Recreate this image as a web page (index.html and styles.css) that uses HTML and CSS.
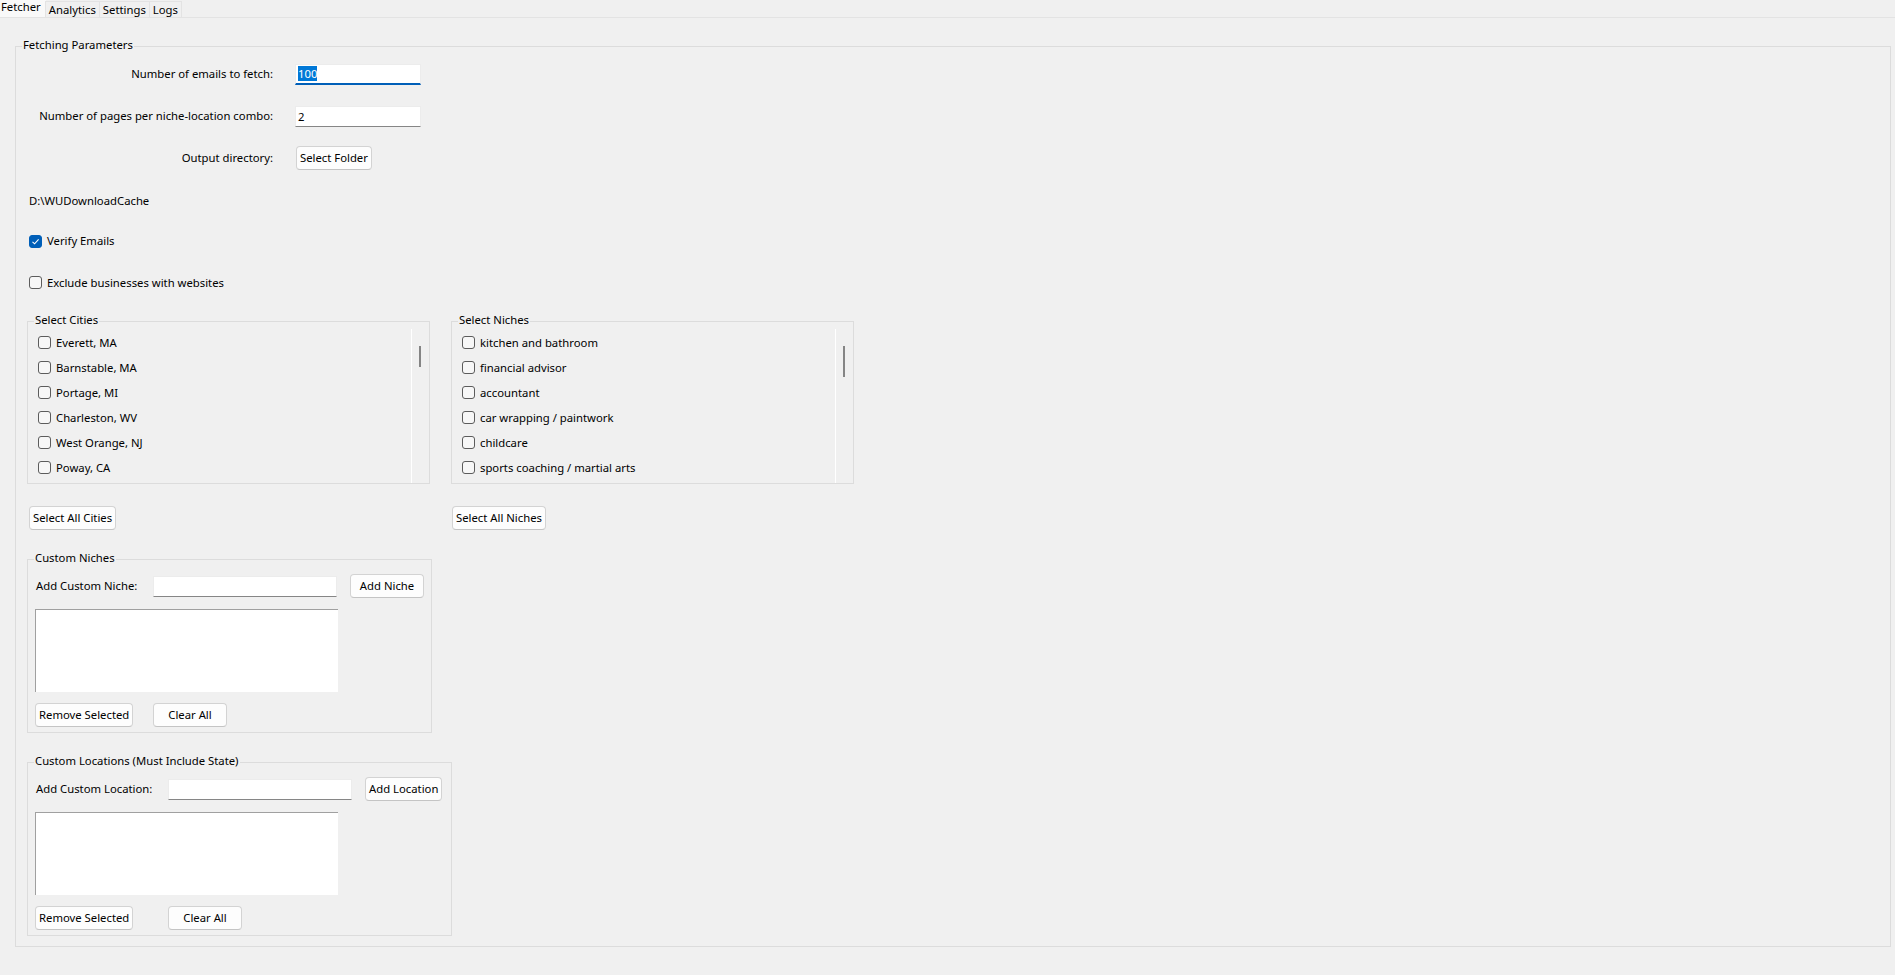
FILE: index.html
```html
<!DOCTYPE html>
<html lang="en">
<head>
    <meta charset="UTF-8">
    <title>Email Fetcher</title>
    <link rel="stylesheet" href="styles.css">
</head>
<body>
    <div class="tabs">
        <span class="tab active">Fetcher</span>
        <span class="tab">Analytics</span>
        <span class="tab">Settings</span>
        <span class="tab">Logs</span>
    </div>

    <div class="group main">
        <div class="group-title">Fetching Parameters</div>

        <div class="form">
            <label>Number of emails to fetch:</label>
            <div class="entry focused"><span class="sel">100</span></div>

            <label>Number of pages per niche-location combo:</label>
            <div class="entry">2</div>

            <label>Output directory:</label>
            <button class="btn folder-btn">Select Folder</button>
        </div>

        <div class="path">D:\WUDownloadCache</div>

        <div class="check-row verify">
            <span class="cb checked">
                <svg width="11" height="11" viewBox="0 0 11 11"><path d="M2.5 5.8 L4.6 7.8 L8.6 3.4" fill="none" stroke="#fff" stroke-width="1.1"/></svg>
            </span>
            Verify Emails
        </div>
        <div class="check-row exclude">
            <span class="cb"></span>
            Exclude businesses with websites
        </div>

        <div class="lists">
            <div class="list-col">
                <div class="group list-group">
                    <div class="group-title">Select Cities</div>
                    <div class="list-body">
                        <div class="items">
                            <div class="item"><span class="cb"></span>Everett, MA</div>
                            <div class="item"><span class="cb"></span>Barnstable, MA</div>
                            <div class="item"><span class="cb"></span>Portage, MI</div>
                            <div class="item"><span class="cb"></span>Charleston, WV</div>
                            <div class="item"><span class="cb"></span>West Orange, NJ</div>
                            <div class="item"><span class="cb"></span>Poway, CA</div>
                        </div>
                        <div class="scrollbar"><div class="thumb"></div></div>
                    </div>
                </div>
                <button class="btn select-all cities-btn">Select All Cities</button>
            </div>

            <div class="list-col">
                <div class="group list-group">
                    <div class="group-title">Select Niches</div>
                    <div class="list-body">
                        <div class="items">
                            <div class="item"><span class="cb"></span>kitchen and bathroom</div>
                            <div class="item"><span class="cb"></span>financial advisor</div>
                            <div class="item"><span class="cb"></span>accountant</div>
                            <div class="item"><span class="cb"></span>car wrapping / paintwork</div>
                            <div class="item"><span class="cb"></span>childcare</div>
                            <div class="item"><span class="cb"></span>sports coaching / martial arts</div>
                        </div>
                        <div class="scrollbar"><div class="thumb long"></div></div>
                    </div>
                </div>
                <button class="btn select-all niches-btn">Select All Niches</button>
            </div>
        </div>

        <div class="group custom niches">
            <div class="group-title">Custom Niches</div>
            <div class="custom-grid">
                <label>Add Custom Niche:</label>
                <div class="entry"></div>
                <button class="btn add-btn">Add Niche</button>
                <div class="listbox"></div>
                <button class="btn remove-btn">Remove Selected</button>
                <button class="btn">Clear All</button>
            </div>
        </div>

        <div class="group custom locations">
            <div class="group-title">Custom Locations (Must Include State)</div>
            <div class="custom-grid">
                <label>Add Custom Location:</label>
                <div class="entry"></div>
                <button class="btn add-btn">Add Location</button>
                <div class="listbox"></div>
                <button class="btn remove-btn">Remove Selected</button>
                <button class="btn">Clear All</button>
            </div>
        </div>
    </div>
</body>
</html>
```

FILE: styles.css
```css
body {
    margin: 0;
    background-color: #f0f0f0;
    font-family: "Noto Sans", "Liberation Sans", sans-serif;
    font-size: 11.3px;
    line-height: 16px;
    color: #000;
}

/* tab strip */
.tabs {
    display: flex;
    align-items: flex-end;
    height: 17px;
    border-bottom: 1px solid #e3e3e3;
}
.tab {
    height: 15px;
    line-height: 15px;
    padding: 0 3px;
    border: 1px solid #e3e3e3;
    border-bottom: none;
    margin-left: -1px;
}
.tab.active {
    height: 17px;
    line-height: 13px;
    padding: 0 5px 0 1px;
    margin-left: 0;
    border: none;
    background-color: #f9f9f9;
}

/* label frames */
.group {
    border: 1px solid #dcdcdc;
}
.group-title {
    width: max-content;
    margin: -10px 0 0 6px;
    padding: 0 1px;
    background-color: #f0f0f0;
}
.main {
    margin: 28px 4px 0 15px;
    padding-bottom: 10px;
}

/* top form */
.form {
    display: grid;
    grid-template-columns: 257px 126px;
    grid-template-rows: 42px 42px 42px;
    column-gap: 22px;
    align-items: center;
}
.form label {
    text-align: right;
}
.entry {
    box-sizing: border-box;
    height: 21px;
    padding-left: 2px;
    line-height: 19px;
    background-color: #fff;
    border: 1px solid #ececec;
    border-bottom-color: #868686;
}
.entry.focused {
    border-bottom: 2px solid #005fb8;
    line-height: 18px;
}
.sel {
    background-color: #0078d7;
    color: #fff;
}
.folder-btn {
    justify-self: start;
    margin-left: 1px;
}

.btn {
    box-sizing: border-box;
    height: 24px;
    min-width: 74px;
    padding: 0 3px;
    font: inherit;
    line-height: 22px;
    white-space: nowrap;
    color: #000;
    background-color: #fdfdfd;
    border: 1px solid #d3d3d3;
    border-bottom-color: #c4c4c4;
    border-radius: 4px;
}

.path {
    height: 44px;
    line-height: 44px;
    padding-left: 13px;
}
.check-row {
    display: flex;
    align-items: center;
    gap: 5px;
    padding-left: 13px;
}
.verify {
    height: 36px;
}
.exclude {
    height: 47px;
}

.cb {
    box-sizing: border-box;
    flex: none;
    display: flex;
    align-items: center;
    justify-content: center;
    width: 13px;
    height: 13px;
    border: 1px solid #5c5c5c;
    border-radius: 3px;
    background-color: #f7f7f7;
}
.cb.checked {
    border-color: #005fb8;
    background-color: #005fb8;
}

/* cities / niches */
.lists {
    display: flex;
    gap: 21px;
    margin: 15px 0 0 11px;
}
.list-col {
    display: flex;
    flex-direction: column;
    align-items: flex-start;
}
.list-group {
    width: 403px;
    box-sizing: border-box;
}
.list-body {
    display: flex;
    height: 155px;
}
.items {
    flex: 1;
    padding: 2px 0 0 10px;
}
.item {
    display: flex;
    align-items: center;
    gap: 5px;
    height: 25px;
}
.scrollbar {
    width: 17px;
    margin-top: 1px;
    border-left: 1px solid #fff;
}
.thumb {
    width: 2px;
    height: 21px;
    margin: 17px 0 0 7px;
    background-color: #858585;
}
.thumb.long {
    height: 31px;
}
.select-all {
    margin-top: 22px;
}
.cities-btn {
    margin-left: 2px;
}
.niches-btn {
    margin-left: 1px;
}

/* custom niches / locations */
.custom {
    box-sizing: border-box;
    margin: 29px 0 0 11px;
}
.custom.niches {
    width: 405px;
}
.custom.locations {
    width: 425px;
    margin-top: 29px;
}
.custom-grid {
    display: grid;
    grid-template-columns: 118px 184px auto;
    grid-template-rows: 40px auto 34px;
    align-items: center;
    justify-items: start;
    margin-left: 7px;
}
.locations .custom-grid {
    grid-template-columns: 133px 184px auto;
}
.custom-grid label {
    padding-left: 1px;
}
.custom-grid .entry {
    width: 184px;
}
.add-btn {
    margin-left: 13px;
}
.listbox {
    grid-column: 1 / span 2;
    box-sizing: border-box;
    width: 303px;
    height: 83px;
    margin: 3px 0 6px;
    background-color: #fff;
    border-top: 1px solid #a0a0a0;
    border-left: 1px solid #a0a0a0;
}
.remove-btn {
    grid-column: 1;
}
```
